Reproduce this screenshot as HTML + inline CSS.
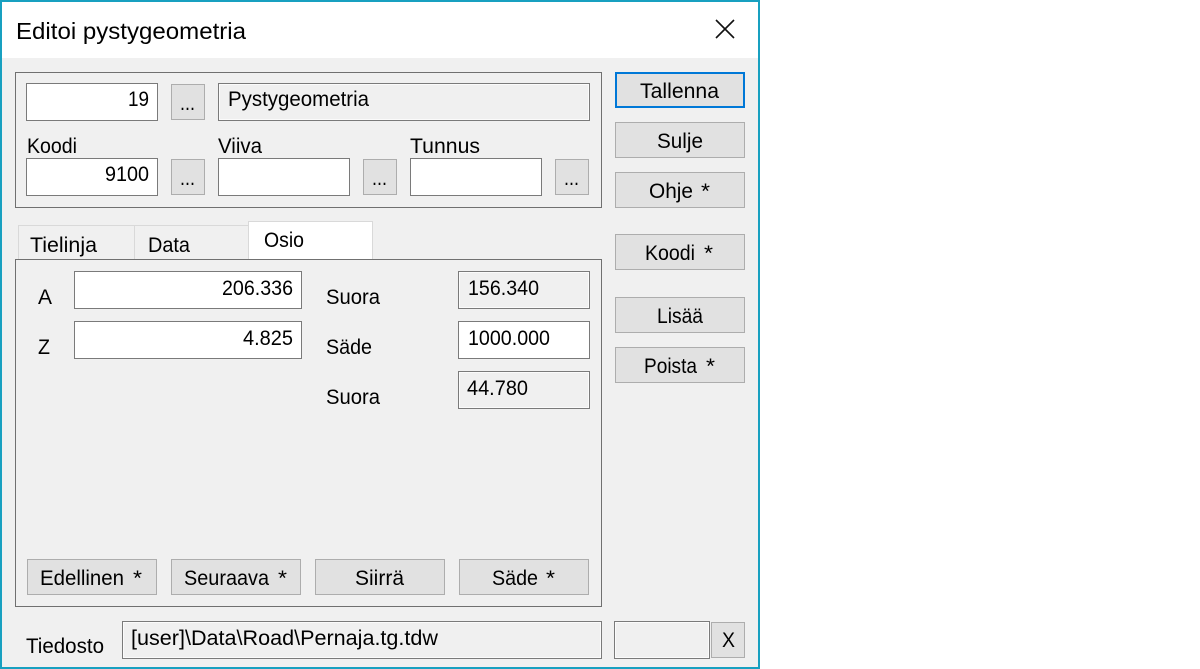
<!DOCTYPE html>
<html><head><meta charset="utf-8"><title>Editoi pystygeometria</title>
<style>
html,body{margin:0;padding:0;background:#fff;width:1200px;height:669px;overflow:hidden}
svg{display:block}
text{font-family:"Liberation Sans",sans-serif;font-size:21.5px;fill:#000}
.f{fill:#fff;stroke:#7a7a7a;stroke-width:1}
.r{fill:#f0f0f0;stroke:#7a7a7a;stroke-width:1}
.i{fill:none;stroke:#fbfbfb;stroke-width:1}
.b{fill:#e1e1e1;stroke:#adadad;stroke-width:1}
.g{fill:none;stroke:#707070;stroke-width:1}
.t{stroke:#d9d9d9;stroke-width:1}
</style></head><body>
<svg width="1200" height="669" viewBox="0 0 1200 669" xmlns="http://www.w3.org/2000/svg">
<rect x="0" y="0" width="760" height="669" fill="#18a0c0"/>
<rect x="2" y="2" width="756" height="665" fill="#f0f0f0"/>
<rect x="2" y="2" width="756" height="56" fill="#fff"/>
<text x="16" y="39" style="font-size:23px" textLength="230" lengthAdjust="spacingAndGlyphs">Editoi pystygeometria</text>
<path d="M716 20L734 38M734 20L716 38" stroke="#111" stroke-width="1.6" fill="none"/>

<rect class="g" x="15.5" y="72.5" width="586" height="135"/>
<rect class="f" x="26.5" y="83.5" width="131" height="37"/>
<rect class="b" x="171.5" y="84.5" width="33" height="35"/>
<rect class="r" x="218.5" y="83.5" width="371" height="37"/>
<rect class="i" x="219.5" y="84.5" width="369" height="35"/>
<rect class="f" x="26.5" y="158.5" width="131" height="37"/>
<rect class="b" x="171.5" y="159.5" width="33" height="35"/>
<rect class="f" x="218.5" y="158.5" width="131" height="37"/>
<rect class="b" x="363.5" y="159.5" width="33" height="35"/>
<rect class="f" x="410.5" y="158.5" width="131" height="37"/>
<rect class="b" x="555.5" y="159.5" width="33" height="35"/>
<text x="128" y="106" textLength="21" lengthAdjust="spacingAndGlyphs">19</text>
<text x="228" y="106" textLength="141" lengthAdjust="spacingAndGlyphs">Pystygeometria</text>
<text x="180" y="110" textLength="15" lengthAdjust="spacingAndGlyphs">...</text>
<text x="27" y="153" textLength="50" lengthAdjust="spacingAndGlyphs">Koodi</text>
<text x="218" y="153" textLength="44" lengthAdjust="spacingAndGlyphs">Viiva</text>
<text x="410" y="153" textLength="70" lengthAdjust="spacingAndGlyphs">Tunnus</text>
<text x="105" y="181" textLength="44" lengthAdjust="spacingAndGlyphs">9100</text>
<text x="180" y="185" textLength="15" lengthAdjust="spacingAndGlyphs">...</text>
<text x="372" y="185" textLength="15" lengthAdjust="spacingAndGlyphs">...</text>
<text x="564" y="185" textLength="15" lengthAdjust="spacingAndGlyphs">...</text>

<rect x="616" y="73" width="128" height="34" fill="#e1e1e1" stroke="#0078d7" stroke-width="2"/>
<rect class="b" x="615.5" y="122.5" width="129" height="35"/>
<rect class="b" x="615.5" y="172.5" width="129" height="35"/>
<rect class="b" x="615.5" y="234.5" width="129" height="35"/>
<rect class="b" x="615.5" y="297.5" width="129" height="35"/>
<rect class="b" x="615.5" y="347.5" width="129" height="35"/>
<text x="640" y="98" textLength="79" lengthAdjust="spacingAndGlyphs">Tallenna</text>
<text x="657" y="148" textLength="46" lengthAdjust="spacingAndGlyphs">Sulje</text>
<text x="649" y="198" textLength="44" lengthAdjust="spacingAndGlyphs">Ohje</text>
<text x="701" y="198" textLength="9" lengthAdjust="spacingAndGlyphs">*</text>
<text x="645" y="260" textLength="50" lengthAdjust="spacingAndGlyphs">Koodi</text>
<text x="704" y="260" textLength="9" lengthAdjust="spacingAndGlyphs">*</text>
<text x="657" y="323" textLength="46" lengthAdjust="spacingAndGlyphs">Lisää</text>
<text x="644" y="373" textLength="53" lengthAdjust="spacingAndGlyphs">Poista</text>
<text x="706" y="373" textLength="9" lengthAdjust="spacingAndGlyphs">*</text>

<rect class="t" x="18.5" y="225.5" width="116" height="40" fill="#f0f0f0"/>
<rect class="t" x="134.5" y="225.5" width="114" height="40" fill="#f0f0f0"/>
<rect class="t" x="248.5" y="221.5" width="124" height="44" fill="#fff"/>
<rect x="15.5" y="259.5" width="586" height="347" fill="#f0f0f0" stroke="#707070"/>
<text x="30" y="252" textLength="67" lengthAdjust="spacingAndGlyphs">Tielinja</text>
<text x="148" y="252" textLength="42" lengthAdjust="spacingAndGlyphs">Data</text>
<text x="264" y="247" textLength="40" lengthAdjust="spacingAndGlyphs">Osio</text>

<rect class="f" x="74.5" y="271.5" width="227" height="37"/>
<rect class="f" x="74.5" y="321.5" width="227" height="37"/>
<rect class="r" x="458.5" y="271.5" width="131" height="37"/>
<rect class="i" x="459.5" y="272.5" width="129" height="35"/>
<rect class="f" x="458.5" y="321.5" width="131" height="37"/>
<rect class="r" x="458.5" y="371.5" width="131" height="37"/>
<rect class="i" x="459.5" y="372.5" width="129" height="35"/>
<text x="38" y="304" textLength="14" lengthAdjust="spacingAndGlyphs">A</text>
<text x="38" y="354" textLength="12" lengthAdjust="spacingAndGlyphs">Z</text>
<text x="222" y="295" textLength="71" lengthAdjust="spacingAndGlyphs">206.336</text>
<text x="243" y="345" textLength="50" lengthAdjust="spacingAndGlyphs">4.825</text>
<text x="326" y="304" textLength="54" lengthAdjust="spacingAndGlyphs">Suora</text>
<text x="326" y="354" textLength="46" lengthAdjust="spacingAndGlyphs">Säde</text>
<text x="326" y="404" textLength="54" lengthAdjust="spacingAndGlyphs">Suora</text>
<text x="468" y="295" textLength="71" lengthAdjust="spacingAndGlyphs">156.340</text>
<text x="468" y="345" textLength="82" lengthAdjust="spacingAndGlyphs">1000.000</text>
<text x="467" y="395" textLength="61" lengthAdjust="spacingAndGlyphs">44.780</text>

<rect class="b" x="27.5" y="559.5" width="129" height="35"/>
<rect class="b" x="171.5" y="559.5" width="129" height="35"/>
<rect class="b" x="315.5" y="559.5" width="129" height="35"/>
<rect class="b" x="459.5" y="559.5" width="129" height="35"/>
<text x="40" y="585" textLength="84" lengthAdjust="spacingAndGlyphs">Edellinen</text>
<text x="133" y="585" textLength="9" lengthAdjust="spacingAndGlyphs">*</text>
<text x="184" y="585" textLength="85" lengthAdjust="spacingAndGlyphs">Seuraava</text>
<text x="278" y="585" textLength="9" lengthAdjust="spacingAndGlyphs">*</text>
<text x="355" y="585" textLength="49" lengthAdjust="spacingAndGlyphs">Siirrä</text>
<text x="492" y="585" textLength="46" lengthAdjust="spacingAndGlyphs">Säde</text>
<text x="546" y="585" textLength="9" lengthAdjust="spacingAndGlyphs">*</text>

<text x="26" y="653" textLength="78" lengthAdjust="spacingAndGlyphs">Tiedosto</text>
<rect class="r" x="122.5" y="621.5" width="479" height="37"/>
<rect class="i" x="123.5" y="622.5" width="477" height="35"/>
<text x="131" y="645" textLength="307" lengthAdjust="spacingAndGlyphs">[user]\Data\Road\Pernaja.tg.tdw</text>
<rect class="r" x="614.5" y="621.5" width="95" height="37"/>
<rect class="i" x="615.5" y="622.5" width="93" height="35"/>
<rect class="b" x="711.5" y="622.5" width="33" height="35"/>
<text x="722" y="647" textLength="13" lengthAdjust="spacingAndGlyphs">X</text>
</svg>
</body></html>
